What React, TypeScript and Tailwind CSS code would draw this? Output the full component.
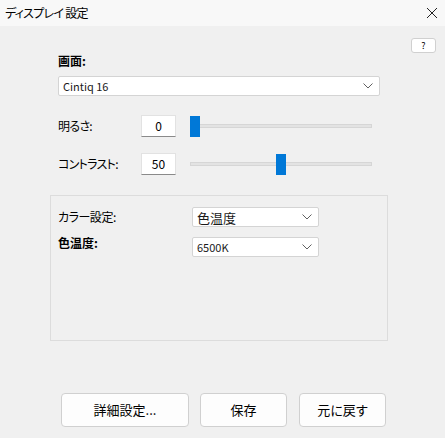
import React from "react";

const FONT = "font-['Noto_Sans_CJK_JP','Noto_Sans',sans-serif] [font-feature-settings:'palt']";

function Chevron() {
  return (
    <svg width="10" height="6" viewBox="0 0 10 6" className="shrink-0">
      <polyline points="0.5,0.5 5,5 9.5,0.5" fill="none" stroke="#606060" strokeWidth="1" />
    </svg>
  );
}

function Combo({ value, width, textClass = "text-[11px]" }: { value: string; width: string; textClass?: string }) {
  return (
    <div className={`${width} h-[20px] bg-white border border-[#d4d4d4] rounded-[2px] flex items-center pl-[4px] pr-[6px]`}>
      <span className={`flex-1 ${textClass} text-[#1a1a1a] leading-none`}>{value}</span>
      <Chevron />
    </div>
  );
}

function Slider({ pos }: { pos: number }) {
  return (
    <div className="relative w-[182px] h-[22px] flex items-center">
      <div className="w-full h-[4px] bg-[#e3e3e3] border border-[#d6d6d6]" />
      <div className="absolute top-[1px] w-[10px] h-[21px] bg-[#0078d7]" style={{ left: pos }} />
    </div>
  );
}

function NumberRow({ label, value, pos }: { label: string; value: string; pos: number }) {
  return (
    <div className="flex items-center h-[22px] pl-[58px]">
      <span className="w-[83px] text-[12px] text-black tracking-[-0.06em]">{label}</span>
      <div className="w-[35px] h-[22px] bg-white border border-[#e2e2e2] border-b-[#8a8a8a] flex items-center justify-center text-[12px]">
        {value}
      </div>
      <div className="ml-[14px]">
        <Slider pos={pos} />
      </div>
    </div>
  );
}

function DialogButton({ label, width }: { label: string; width: string }) {
  return (
    <button className={`${width} h-[34px] bg-[#fdfdfd] border border-[#d0d0d0] rounded-[4px] text-[13px] text-black`}>
      {label}
    </button>
  );
}

export default function App() {
  return (
    <div className={`w-[445px] h-[438px] bg-[#f0f0f0] flex flex-col ${FONT}`}>
      {/* Title bar */}
      <div className="h-[26px] bg-[#f8f8f8] flex items-center justify-between pl-[5px] pr-[7px]">
        <span className="text-[12px] text-black tracking-[-0.06em]">ディスプレイ 設定</span>
        <svg width="12" height="12" viewBox="0 0 12 12">
          <path d="M1 1 L11 11 M11 1 L1 11" stroke="#222" strokeWidth="1" />
        </svg>
      </div>

      {/* Help */}
      <div className="flex justify-end pr-[9px] mt-[12px]">
        <button className="w-[25px] h-[15px] bg-white border border-[#d0d0d0] rounded-[3px] text-[9px] leading-none text-black">
          ?
        </button>
      </div>

      {/* Display picker */}
      <div className="pl-[58px] h-[16px] flex items-center text-[12px] font-bold text-black">画面:</div>
      <div className="pl-[58px] mt-[7px]">
        <Combo value="Cintiq 16" width="w-[322px]" />
      </div>

      <div className="mt-[19px]">
        <NumberRow label="明るさ:" value="0" pos={0} />
      </div>
      <div className="mt-[16px]">
        <NumberRow label="コントラスト:" value="50" pos={86} />
      </div>

      {/* Color group */}
      <div className="ml-[50px] mt-[20px] w-[338px] h-[146px] border border-[#dcdcdc] pl-[7px] pt-[11px] flex flex-col gap-[10px]">
        <div className="flex items-center h-[20px]">
          <span className="w-[134px] text-[12px] text-black tracking-[-0.04em]">カラー設定:</span>
          <Combo value="色温度" width="w-[127px]" textClass="text-[13px]" />
        </div>
        <div className="flex items-start h-[20px]">
          <span className="w-[134px] text-[12px] font-bold text-black leading-none">色温度:</span>
          <Combo value="6500K" width="w-[127px]" />
        </div>
      </div>

      {/* Actions */}
      <div className="mt-[52px] pl-[61px] flex gap-[10px]">
        <DialogButton label="詳細設定..." width="w-[128px]" />
        <DialogButton label="保存" width="w-[87px] ml-[1px]" />
        <DialogButton label="元に戻す" width="w-[87px] ml-[2px]" />
      </div>
    </div>
  );
}
